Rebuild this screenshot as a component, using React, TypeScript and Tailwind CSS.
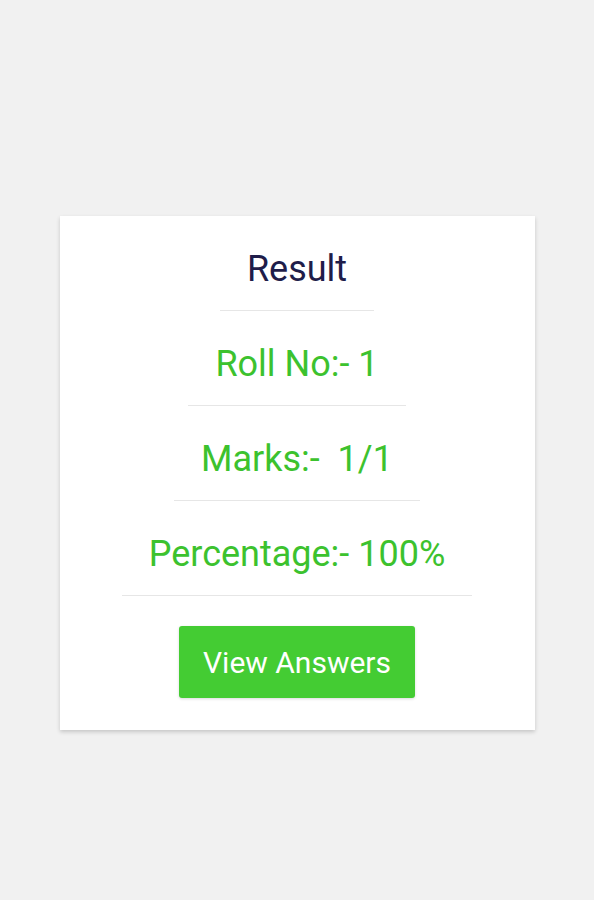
const rows = ["Roll No:- 1", "Marks:-\u00a0 1/1", "Percentage:- 100%"];

export default function App() {
  return (
    <div className="min-h-[900px] bg-[#f1f1f1] pt-[216px] font-['Roboto',sans-serif]">
      <div className="mx-auto flex w-[475px] flex-col items-center bg-white pb-[32px] shadow-[0_2px_4px_rgba(0,0,0,0.18)]">
        <div className="border-b border-[#e6e6e6] px-[27px] pt-[33px] pb-[21px] text-[36px] leading-[40px] text-[#1f1d4a]">
          Result
        </div>
        {rows.map((row) => (
          <div
            key={row}
            className="border-b border-[#e6e6e6] px-[27px] pt-[33px] pb-[21px] text-[36px] leading-[40px] text-[#3cc22e]"
          >
            {row}
          </div>
        ))}
        <button className="mt-[30px] h-[72px] w-[236px] rounded-[3px] bg-[#44cc33] text-[30px] text-white shadow-[0_1px_3px_rgba(0,0,0,0.15)]">
          View Answers
        </button>
      </div>
    </div>
  );
}
